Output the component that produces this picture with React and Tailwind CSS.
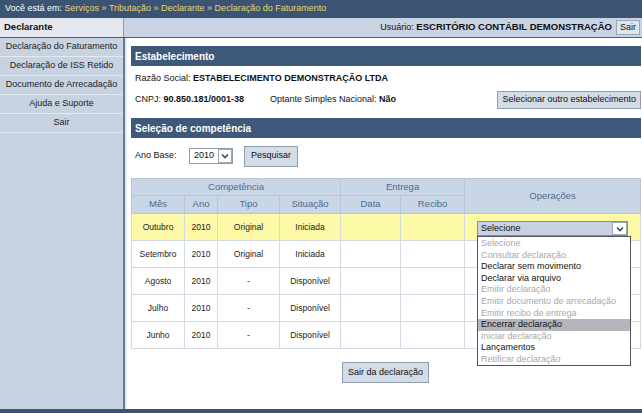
import React from 'react';

function Arrow({ className = '' }) {
  return (
    <span className={`flex items-center justify-center bg-white border border-[#9aa8b8] ${className}`}>
      <svg width="8" height="6" viewBox="0 0 8 6">
        <path d="M1 1.5 L4 4.5 L7 1.5" fill="none" stroke="#3a4d66" strokeWidth="1.6" />
      </svg>
    </span>
  );
}

const menuItems = [
  ['Selecione', false],
  ['Consultar declaração', false],
  ['Declarar sem movimento', true],
  ['Declarar via arquivo', true],
  ['Emitir declaração', false],
  ['Emitir documento de arrecadação', false],
  ['Emitir recibo de entrega', false],
  ['Encerrar declaração', true, true],
  ['Iniciar declaração', false],
  ['Lançamentos', true],
  ['Retificar declaração', false],
];

const rows = [
  ['Outubro', '2010', 'Original', 'Iniciada'],
  ['Setembro', '2010', 'Original', 'Iniciada'],
  ['Agosto', '2010', '-', 'Disponível'],
  ['Julho', '2010', '-', 'Disponível'],
  ['Junho', '2010', '-', 'Disponível'],
];

const sideItems = [
  'Declaração do Faturamento',
  'Declaração de ISS Retido',
  'Documento de Arrecadação',
  'Ajuda e Suporte',
  'Sair',
];

export default function App() {
  const th = 'border border-[#b9c6d6] bg-[#c9d6e6] text-[#4f6a8a] font-normal text-[9.5px] p-0';
  const td = 'border border-[#d3dae3] text-[8.5px] text-[#222] text-center p-0';

  return (
    <div className="w-[642px] h-[413px] flex flex-col bg-white font-['Liberation_Sans',Arial,sans-serif] overflow-hidden whitespace-nowrap">
      {/* Breadcrumb */}
      <div className="h-[18px] shrink-0 bg-[#3b5473] flex items-center px-[5px] text-[9px] text-white">
        <span>Você está em:&nbsp;</span>
        <span className="text-[#e9d66f]">Serviços » Tributação » Declarante » Declaração do Faturamento</span>
      </div>

      {/* User row */}
      <div className="h-[20px] shrink-0 flex border-b border-[#4b607a]">
        <div className="w-[124px] bg-[#e4e8ee] border-r border-[#8d9aab] flex items-center px-[4px] text-[9.5px] font-bold text-[#111]">
          Declarante
        </div>
        <div className="flex-1 bg-[#c8d4e3] flex items-center justify-end gap-[4px] pr-[2px] text-[9px] text-[#111]">
          <span>
            Usuário: <b className="text-[9.5px]">ESCRITÓRIO CONTÁBIL DEMONSTRAÇÃO</b>
          </span>
          <span className="h-[15px] px-[3px] flex items-center bg-[#dfe5ed] border border-[#9aa7b7] text-[9px]">Sair</span>
        </div>
      </div>

      <div className="flex-1 flex min-h-0">
        {/* Sidebar */}
        <aside className="w-[125px] shrink-0 bg-[#c8d3e2] border-r-2 border-[#6a7a8e] flex flex-col">
          {sideItems.map((s) => (
            <div
              key={s}
              className="h-[19px] flex items-center justify-center border-b border-[#e6ebf2] text-[9px] text-[#222]"
            >
              {s}
            </div>
          ))}
        </aside>

        {/* Main */}
        <main className="flex-1 border-l-2 border-[#e3eaf3] pl-[4px] pr-[2px] pt-[8px] text-[9px] text-[#111]">
          <div className="h-[20px] bg-[#3e5979] text-white font-bold text-[10px] flex items-center px-[4px]">
            Estabelecimento
          </div>
          <div className="h-[23px] pt-[2px] flex items-center px-[4px]">
            Razão Social:&nbsp;<b>ESTABELECIMENTO DEMONSTRAÇÃO LTDA</b>
          </div>
          <div className="h-[22px] flex items-center pl-[4px]">
            <span className="w-[135px]">
              CNPJ: <b>90.850.181/0001-38</b>
            </span>
            <span>
              Optante Simples Nacional: <b>Não</b>
            </span>
            <span className="ml-auto h-[18px] px-[4px] flex items-center bg-[#d2dbe6] border border-[#8f9db0]">
              Selecionar outro estabelecimento
            </span>
          </div>
          <div className="h-[20px] mt-[7px] bg-[#3e5979] text-white font-bold text-[10px] flex items-center px-[4px]">
            Seleção de competência
          </div>

          <div className="h-[30px] mt-[3px] flex items-center pl-[4px]">
            <span className="w-[54px]">Ano Base:</span>
            <span className="h-[16px] w-[44px] flex items-center bg-white border border-[#8f9db0] pl-[4px]">
              <span className="flex-1">2010</span>
              <Arrow className="w-[14px] h-[14px]" />
            </span>
            <span className="ml-[11px] h-[21px] px-[6px] flex items-center bg-[#d2dbe6] border border-[#8f9db0]">
              Pesquisar
            </span>
          </div>

          <table className="mt-[7px] w-[509px] border-collapse table-fixed">
            <colgroup>
              <col className="w-[53px]" />
              <col className="w-[33px]" />
              <col className="w-[62px]" />
              <col className="w-[61px]" />
              <col className="w-[60px]" />
              <col className="w-[64px]" />
              <col className="w-[176px]" />
            </colgroup>
            <thead>
              <tr className="h-[17px]">
                <th colSpan={4} className={th}>Competência</th>
                <th colSpan={2} className={th}>Entrega</th>
                <th rowSpan={2} className={th}>Operações</th>
              </tr>
              <tr className="h-[18px]">
                <th className={th}>Mês</th>
                <th className={th}>Ano</th>
                <th className={th}>Tipo</th>
                <th className={th}>Situação</th>
                <th className={th}>Data</th>
                <th className={th}>Recibo</th>
              </tr>
            </thead>
            <tbody>
              {rows.map((r, i) => (
                <tr key={r[0]} className={`h-[27px] ${i === 0 ? 'bg-[#fbf8a6]' : ''}`}>
                  {r.map((c, j) => (
                    <td key={j} className={td}>{c}</td>
                  ))}
                  <td className={td} />
                  <td className={td} />
                  <td className={`${td} relative`}>
                    {i === 0 && (
                      <>
                        <div className="absolute left-[12px] top-[7px] w-[151px] h-[15px] flex bg-[#c6d2e2] border border-[#7f8ea3] text-left text-[9px] text-[#111]">
                          <span className="flex-1 pl-[3px] leading-[13px]">Selecione</span>
                          <Arrow className="w-[15px] h-[13px]" />
                        </div>
                        <div className="absolute z-10 left-[12px] top-[22px] w-[154px] h-[130px] bg-white border border-[#555] text-left text-[9px] leading-[11.6px] py-[1px]">
                          {menuItems.map(([t, on, sel]) => (
                            <div
                              key={t}
                              className={`px-[3px] ${on ? 'text-[#111]' : 'text-[#a8a8a8]'} ${sel ? 'bg-[#b5b6bd]' : ''}`}
                            >
                              {t}
                            </div>
                          ))}
                        </div>
                      </>
                    )}
                  </td>
                </tr>
              ))}
            </tbody>
          </table>

          <div className="w-[509px] flex justify-center mt-[13px]">
            <span className="h-[21px] px-[5px] flex items-center bg-[#d2dbe6] border border-[#8f9db0]">
              Sair da declaração
            </span>
          </div>
        </main>
      </div>

      <div className="h-[4px] shrink-0 bg-[#3b5473]" />
    </div>
  );
}
